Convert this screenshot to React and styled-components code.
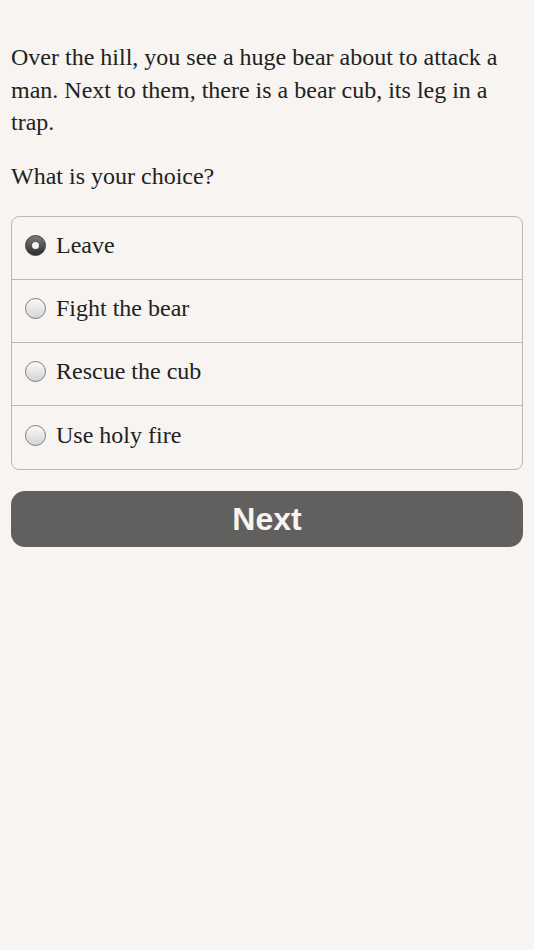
import styled, { createGlobalStyle } from "styled-components";

const GlobalStyle = createGlobalStyle`
  html, body {
    margin: 0;
    padding: 0;
    background-color: #f7f4f1;
  }
  body {
    font-family: "Liberation Serif", "Times New Roman", serif;
    color: #222222;
  }
`;

const choices = ["Leave", "Fight the bear", "Rescue the cub", "Use holy fire"];

export default function App() {
  const selected = 0;

  return (
    <>
      <GlobalStyle />
      <Page>
        <Story>
          Over the hill, you see a huge bear about to attack a man. Next to
          them, there is a bear cub, its leg in a trap.
        </Story>
        <Question>What is your choice?</Question>
        <ChoiceList>
          {choices.map((c, index) => (
            <Choice key={c} isLast={index === choices.length - 1}>
              <Radio isChecked={index === selected} />
              <ChoiceText>{c}</ChoiceText>
            </Choice>
          ))}
        </ChoiceList>
        <NextButton>Next</NextButton>
      </Page>
    </>
  );
}

const Page = styled.div`
  padding: 41px 11px 0 11px;
  display: flex;
  flex-direction: column;
`;

const Story = styled.p`
  margin: 0;
  font-size: 24px;
  line-height: 32.5px;
`;

const Question = styled.p`
  margin: 21px 0 0 0;
  font-size: 24px;
  line-height: 32.5px;
`;

const ChoiceList = styled.div`
  margin-top: 24px;
  border: 1px solid #b9b8b7;
  border-radius: 8px;
  display: flex;
  flex-direction: column;
`;

const Choice = styled.div`
  height: 63px;
  box-sizing: border-box;
  display: flex;
  align-items: center;
  gap: 10px;
  padding: 0 0 5px 13px;
  border-bottom: ${(props) => (props.isLast ? "none" : "1px solid #b9b8b7")};
`;

const Radio = styled.span`
  width: 21px;
  height: 21px;
  box-sizing: border-box;
  border-radius: 50%;
  flex-shrink: 0;
  position: relative;
  border: 1px solid ${(props) => (props.isChecked ? "#3a3a3a" : "#7d7d7d")};
  background: ${(props) =>
    props.isChecked
      ? "linear-gradient(#7a7a7a, #2e2e2e)"
      : "linear-gradient(#fafafa, #d4d4d4)"};

  &::after {
    content: "";
    display: ${(props) => (props.isChecked ? "block" : "none")};
    position: absolute;
    width: 7px;
    height: 7px;
    border-radius: 50%;
    background: #f4f4f4;
    top: 6px;
    left: 6px;
  }
`;

const ChoiceText = styled.span`
  font-size: 24px;
  color: #222222;
`;

const NextButton = styled.button`
  margin-top: 21px;
  height: 56px;
  border: none;
  border-radius: 14px;
  background-color: #61605e;
  color: #f7f4f1;
  font-family: "Liberation Sans", Arial, sans-serif;
  font-weight: 700;
  font-size: 32px;
  cursor: pointer;
`;
